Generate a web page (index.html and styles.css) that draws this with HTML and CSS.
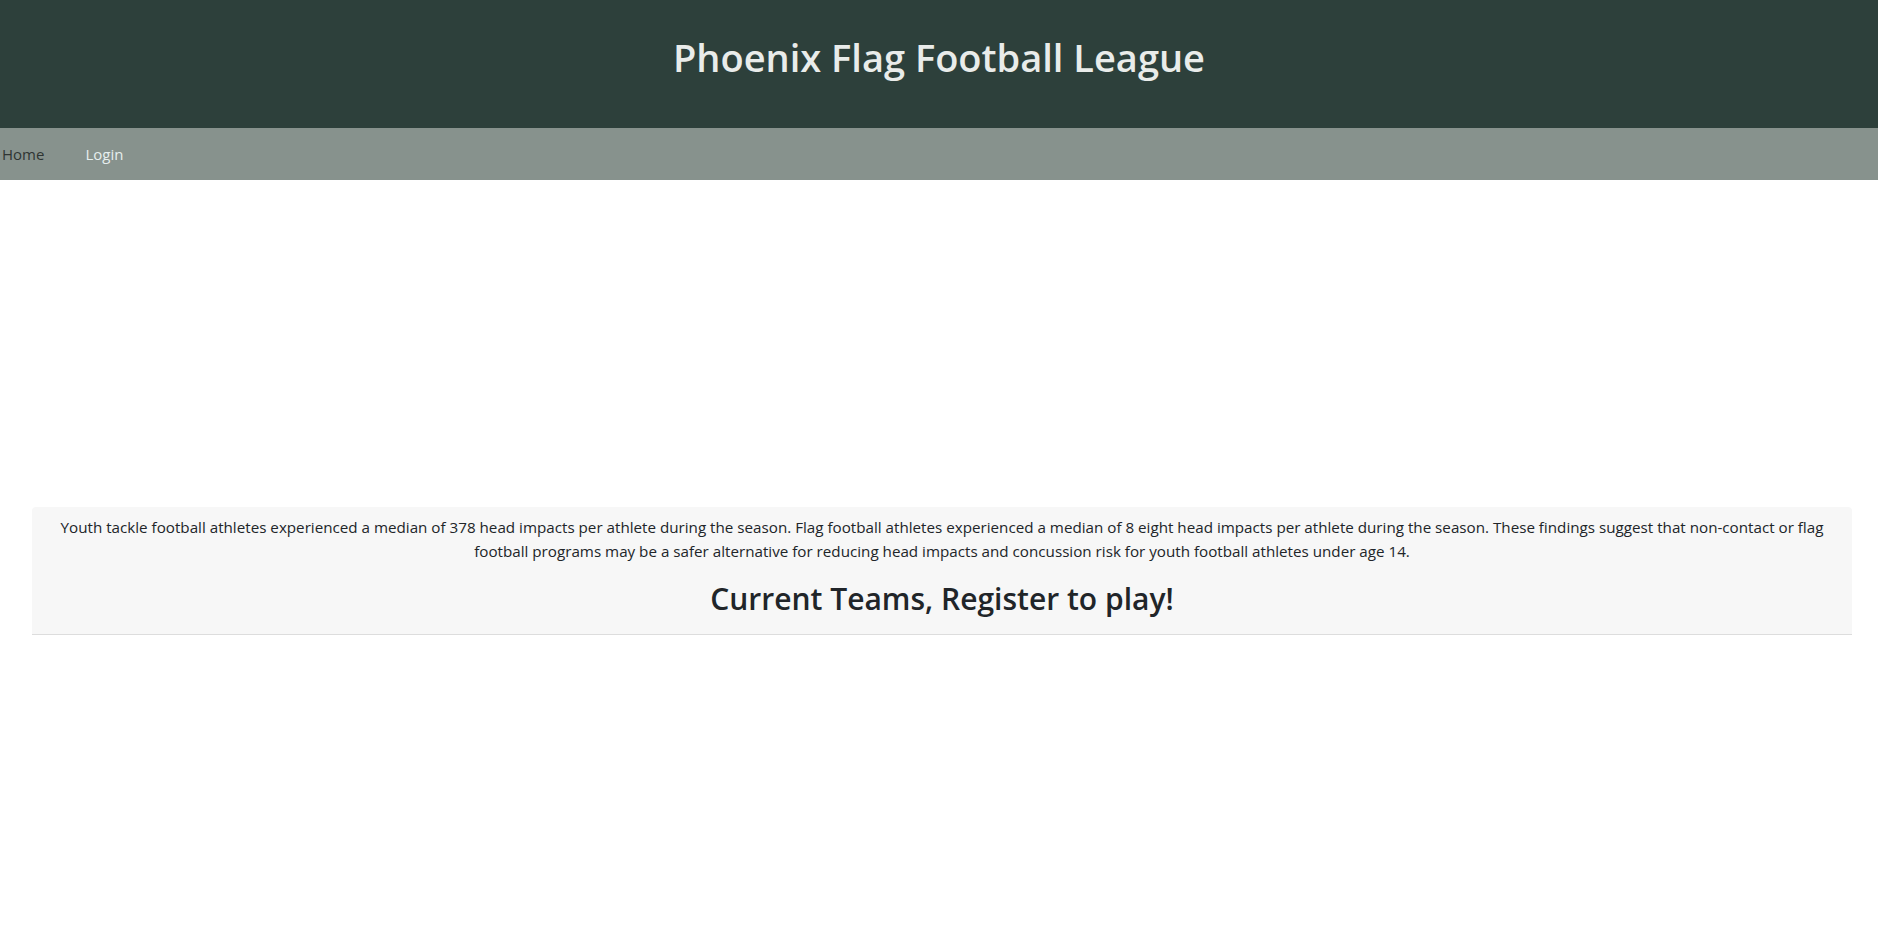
FILE: index.html
```html
<!DOCTYPE html>
<html lang="en">
<head>
<meta charset="utf-8">
<title>Phoenix Flag Football League</title>
<link rel="stylesheet" href="styles.css">
</head>
<body>
<header class="site-header">
  <h1 class="site-title">Phoenix Flag Football League</h1>
</header>
<nav class="site-nav">
  <a class="nav-link nav-link--active" href="#">Home</a>
  <a class="nav-link" href="#">Login</a>
</nav>
<main class="main">
  <section class="card">
    <div class="card-header">
      <p class="card-text">Youth tackle football athletes experienced a median of 378 head impacts per athlete during the season. Flag football athletes experienced a median of 8 eight head impacts per athlete during the season. These findings suggest that non-contact or flag football programs may be a safer alternative for reducing head impacts and concussion risk for youth football athletes under age 14.</p>
      <h2 class="card-title">Current Teams, Register to play!</h2>
    </div>
  </section>
</main>
</body>
</html>
```

FILE: styles.css
```css
* { box-sizing: border-box; }
html, body { margin: 0; padding: 0; }
body {
  font-family: "Open Sans", "Noto Sans", sans-serif;
  color: #212529;
  background: #ffffff;
  font-size: 16px;
  line-height: 1.5;
}
.site-header {
  background: #2d403b;
  height: 128px;
  display: flex;
  align-items: center;
  justify-content: center;
}
.site-title {
  margin: 0 0 12px;
  color: #e9ecea;
  font-size: 38px;
  font-weight: 600;
  line-height: 1.2;
}
.site-nav {
  background: #87928d;
  height: 52px;
  display: flex;
  align-items: center;
  padding-left: 2px;
  gap: 41px;
}
.nav-link {
  font-size: 15px;
  text-decoration: none;
  color: #e6eeee;
}
.nav-link--active { color: #2f3533; }
.main {
  padding: 327px 26px 0 32px;
}
.card {
  border-radius: 4px 4px 0 0;
  background: #ffffff;
}
.card-header {
  background: #f7f7f7;
  border-bottom: 1px solid #dddddd;
  border-radius: 4px 4px 0 0;
  padding: 8px 20px 17px;
  text-align: center;
}
.card-text {
  margin: 0 0 18px;
  font-size: 15.2px;
  line-height: 24px;
  color: #212529;
}
.card-title {
  margin: 0;
  font-size: 30px;
  font-weight: 600;
  line-height: 1.2;
  color: #212529;
}
```
